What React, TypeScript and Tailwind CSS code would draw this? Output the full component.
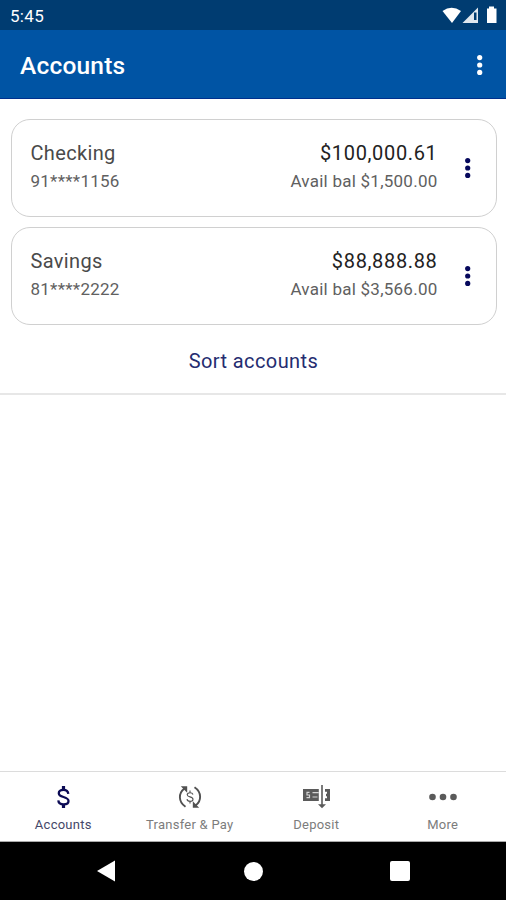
import type { ReactNode } from 'react'

interface Account {
  name: string
  number: string
  balance: string
  available: string
}

const accounts: Account[] = [
  { name: 'Checking', number: '91****1156', balance: '$100,000.61', available: 'Avail bal $1,500.00' },
  { name: 'Savings', number: '81****2222', balance: '$88,888.88', available: 'Avail bal $3,566.00' },
]

function MoreDots({ className }: { className: string }) {
  return (
    <svg viewBox="0 0 8 22" className={`h-[22px] w-2 ${className}`} fill="currentColor">
      <circle cx="3.7" cy="3.6" r="2.6" />
      <circle cx="3.7" cy="11" r="2.6" />
      <circle cx="3.7" cy="18.4" r="2.6" />
    </svg>
  )
}

function StatusBar() {
  return (
    <div className="flex h-[30px] items-center justify-between bg-[#003c71] pl-[10px] pr-[7px] text-white">
      <span className="mt-px text-[17px] leading-5 tracking-[0.3px]">5:45</span>
      <svg viewBox="0 0 58 20" className="h-5 w-[58px]" fill="currentColor">
        <path d="M1.5 6Q10.5 -.5 20 6L11 18Z" />
        <path d="M37 2.5V18H21.5Z" fillOpacity="0.88" />
        <path d="M33 7.5H35.5V15H33Z" fill="#003c71" />
        <path d="M46 3.5H48V1.5H53V3.5H55.5V18H46Z" />
      </svg>
    </div>
  )
}

function AccountCard({ account }: { account: Account }) {
  return (
    <div className="flex h-[98px] rounded-[19px] border-[1.5px] border-[#d0d0d0] pl-[19px] pr-[24px] pt-[21px]">
      <div className="flex-1">
        <p className="text-[20px] leading-[25px] tracking-[0.35px] text-[#4a4a4a]">{account.name}</p>
        <p className="mt-[3px] text-[17px] leading-6 tracking-[0.25px] text-[#606060]">{account.number}</p>
      </div>
      <div className="text-right">
        <p className="text-[20px] leading-[25px] tracking-[0.65px] text-[#222]">{account.balance}</p>
        <p className="mt-[3px] text-[17px] leading-6 tracking-[0.25px] text-[#606060]">{account.available}</p>
      </div>
      <MoreDots className="ml-[26px] mt-[16px] text-[#06085c]" />
    </div>
  )
}

function DollarIcon() {
  return (
    <svg viewBox="0 0 28 28" className="size-7 text-[#0c0b55]" fill="none" stroke="currentColor" strokeWidth="2.3">
      <path d="M14.5 3V7M14.5 21V25" strokeWidth="3.2" />
      <path d="M19.3 10.8C19 8 17.2 6.8 14.5 6.8C11.6 6.8 9.8 8.2 9.8 10.2C9.8 12.4 11.7 13.2 14.5 14C17.6 14.9 19.5 15.8 19.5 18C19.5 20.2 17.6 21.4 14.7 21.4C11.500 21.4 9.500 20 9.300 17.400" />
    </svg>
  )
}

function TransferIcon() {
  return (
    <svg viewBox="0 0 28 28" className="size-7 text-[#515151]" fill="none" stroke="currentColor" strokeWidth="1.9">
      <path d="M9.500 23.800C2.200 19 2.200 10 8.500 5.500" />
      <path d="M18.500 4.200C25.800 9 25.800 18 19.500 22.500" />
      <path d="M4.800 3.300H11.200V9.700Z" fill="currentColor" stroke="none" />
      <path d="M23.200 24.700H16.800V18.300Z" fill="currentColor" stroke="none" />
      <path d="M14 7.500V9.800M14 18V20.500M17 11.500C16.500 10.100 15.500 9.700 14 9.700C12.200 9.700 11.200 10.500 11.200 11.800C11.200 13.200 12.400 13.500 14 13.900C15.900 14.400 17 14.900 17 16.200C17 17.700 15.800 18.400 14.100 18.400C12.400 18.400 11.200 17.700 11 16.100" strokeWidth="1.100" />
    </svg>
  )
}

function DepositIcon() {
  return (
    <svg viewBox="0 0 28 28" className="size-7 text-[#5a5a5a]" fill="none" stroke="currentColor">
      <path d="M1 6H16.800V18H1Z" fill="currentColor" stroke="none" />
      <path d="M7.500 9.300H5V12H7.500V14.700H4.500M10.500 9.700H16.800M10.500 14H15.500" stroke="#d4d4d4" strokeWidth="1.200" />
      <path d="M23 6H28V18H23V15.300H25V13.300H24V10.700H25V8.700H23Z" fill="currentColor" stroke="none" />
      <path d="M20 2V22" strokeWidth="2" strokeOpacity="0.8" />
      <path d="M16 21.300H24L20 25.300Z" fill="currentColor" stroke="none" />
    </svg>
  )
}

function MoreIcon() {
  return (
    <svg viewBox="0 0 28 28" className="size-7 text-[#5a5a5a]" fill="currentColor">
      <circle cx="3.5" cy="14" r="3.3" />
      <circle cx="14" cy="14" r="3.3" />
      <circle cx="24.5" cy="14" r="3.3" />
    </svg>
  )
}

const tabs: { label: string; icon: ReactNode; active?: boolean }[] = [
  { label: 'Accounts', icon: <DollarIcon />, active: true },
  { label: 'Transfer & Pay', icon: <TransferIcon /> },
  { label: 'Deposit', icon: <DepositIcon /> },
  { label: 'More', icon: <MoreIcon /> },
]

export default function App() {
  return (
    <div className="flex h-[900px] w-[506px] flex-col overflow-hidden bg-white font-['Roboto',sans-serif]">
      <StatusBar />
      <header className="flex h-[69px] items-center justify-between border-b border-[#00308d] bg-[#0054a4] pl-[20px] pr-[22px] text-white">
        <h1 className="mt-[3px] text-[24.5px] font-medium leading-8 tracking-[0.2px]">Accounts</h1>
        <MoreDots className="mt-px" />
      </header>

      <main className="flex-1">
        <section className="flex h-[296px] flex-col gap-[10px] border-b-2 border-[#e7e7e7] pl-[10.5px] pr-[9.5px] pt-[20px]">
          {accounts.map((account) => (
            <AccountCard key={account.name} account={account} />
          ))}
          <button className="mt-[14px] self-center text-[20px] leading-6 tracking-[0.4px] text-[#252c70]">Sort accounts</button>
        </section>
      </main>

      <nav className="grid h-[71px] grid-cols-4 border-b border-t border-b-[#aaa] border-t-[#dcdcdc]">
        {tabs.map((tab) => (
          <div key={tab.label} className="flex flex-col items-center pt-[11px]">
            {tab.icon}
            <span
              className={`mt-[5px] text-[13px] leading-[18px] tracking-[0.25px] ${
                tab.active ? 'text-[#444768]' : 'text-[#7c7c7c]'
              }`}
            >
              {tab.label}
            </span>
          </div>
        ))}
      </nav>

      <div className="flex h-[58px] items-center justify-between bg-black px-[96px] text-white">
        <svg viewBox="0 0 20 22" className="h-[22px] w-5" fill="currentColor">
          <path d="M1 11L19 .5V21.5Z" />
        </svg>
        <div className="size-[19px] rounded-full bg-white" />
        <div className="size-5 rounded-xs bg-white" />
      </div>
    </div>
  )
}
